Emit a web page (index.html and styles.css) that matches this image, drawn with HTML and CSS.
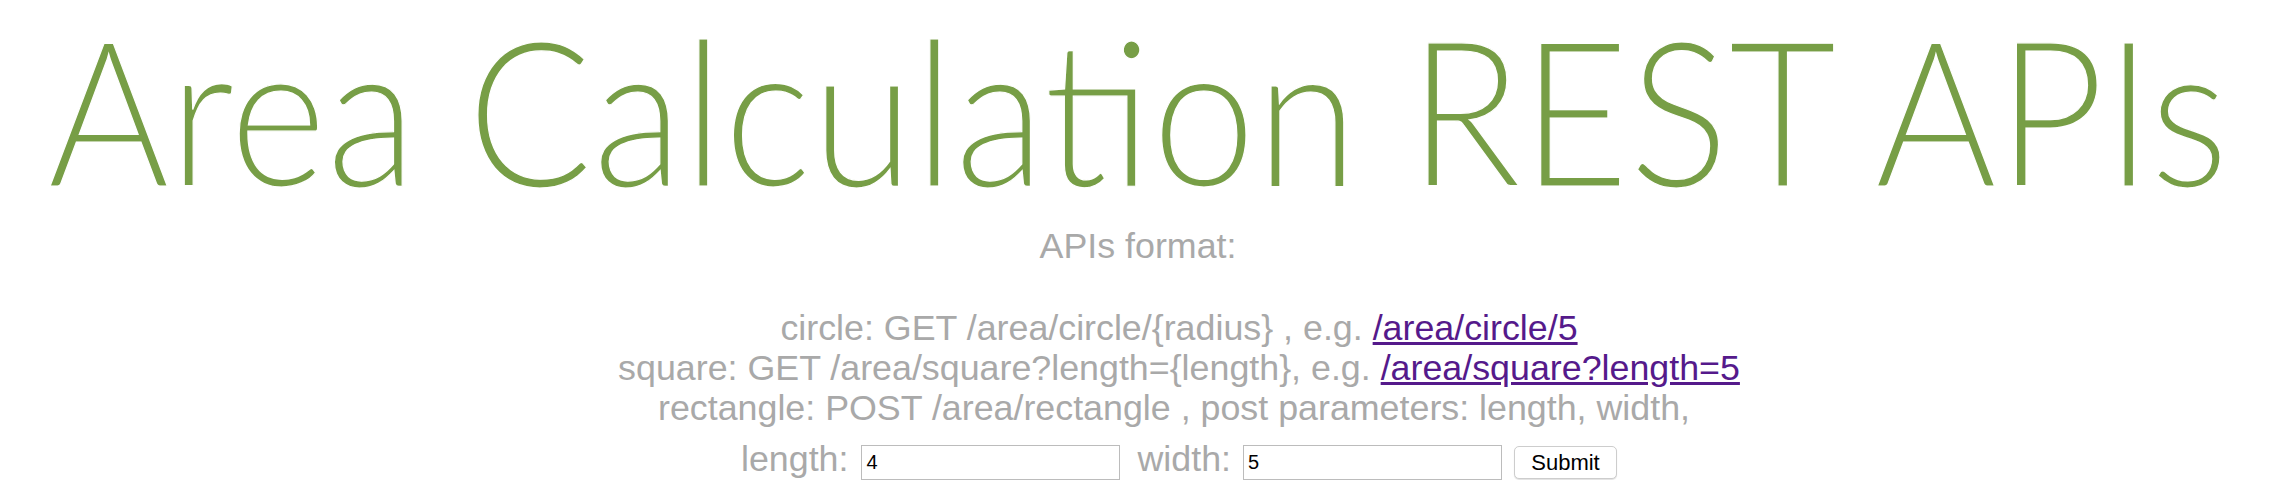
FILE: index.html
```html
<!DOCTYPE html>
<html>
<head>
<meta charset="utf-8">
<title>Area Calculation REST APIs</title>
<link rel="stylesheet" href="styles.css">
</head>
<body>
<h1 class="title"><span class="title-text">Area Calculation REST APIs</span></h1>
<div class="content">
  <p class="format">APIs format:</p>
  <p class="apis">
    circle: GET /area/circle/{radius} , e.g. <a class="link" href="#c">/area/circle/5</a><br>
    square: GET /area/square?length={length}, e.g. <a class="link" href="#s">/area/square?length=5</a><br>
    rectangle: POST /area/rectangle , post parameters: length, width,&nbsp;
  </p>
  <form class="rect-form" onsubmit="return false">
    <span class="label label-length">length:</span>
    <input class="field field-length" type="text" name="length" value="4">
    <span class="label label-width">width:</span>
    <input class="field field-width" type="text" name="width" value="5">
    <button class="submit" type="submit">Submit</button>
  </form>
</div>
</body>
</html>
```
FILE: styles.css
```css
html, body {
  margin: 0;
  padding: 0;
  background: #ffffff;
}

.title {
  margin: -2px 0 0 0;
  display: flex;
  justify-content: center;
  font-family: "Lato Light", "Lato", "Liberation Sans", sans-serif;
  font-weight: 300;
  font-size: 190px;
  line-height: 228px;
  color: #779e46;
  white-space: nowrap;
}

.title-text {
  display: inline-block;
  flex: none;
  transform: scale(0.9786, 1.058);
  transform-origin: 50% 187.5px;
  -webkit-text-stroke: 1.15px #ffffff;
}

.content {
  font-family: "Liberation Sans", Arial, Helvetica, sans-serif;
  font-size: 35.8px;
  line-height: 40px;
  color: #a9a9a9;
  text-align: center;
}

.format {
  margin: 0;
}

.apis {
  margin: 42px 0 0 0;
  padding-left: 82px;
}

.link {
  color: #551a8b;
  text-decoration: underline;
}

.rect-form {
  margin: 17px 0 0 0;
  display: flex;
  justify-content: center;
  align-items: flex-start;
  padding-left: 82px;
  height: 35px;
}

.label {
  white-space: nowrap;
  line-height: 35px;
  margin-top: -3px;
}

.label-length {
  margin-right: 13px;
}

.label-width {
  margin-right: 12px;
}

.field {
  box-sizing: border-box;
  width: 259px;
  height: 35px;
  margin: 0;
  padding: 0 4px;
  border: 1px solid #bcbcbc;
  border-radius: 0;
  font-family: "Liberation Sans", Arial, sans-serif;
  font-size: 20px;
  color: #000000;
  background: #ffffff;
  outline: none;
}

.field-length {
  margin-right: 17px;
}

.field-width {
  margin-right: 12px;
}

.submit {
  box-sizing: border-box;
  width: 103px;
  height: 33px;
  margin: 1px 0 0 0;
  padding: 0;
  border: 1px solid #cdcdcd;
  border-radius: 5px;
  background: #ffffff;
  box-shadow: 0 1px 1px rgba(0, 0, 0, 0.12);
  font-family: "Liberation Sans", Arial, sans-serif;
  font-size: 22px;
  color: #000000;
}
```
